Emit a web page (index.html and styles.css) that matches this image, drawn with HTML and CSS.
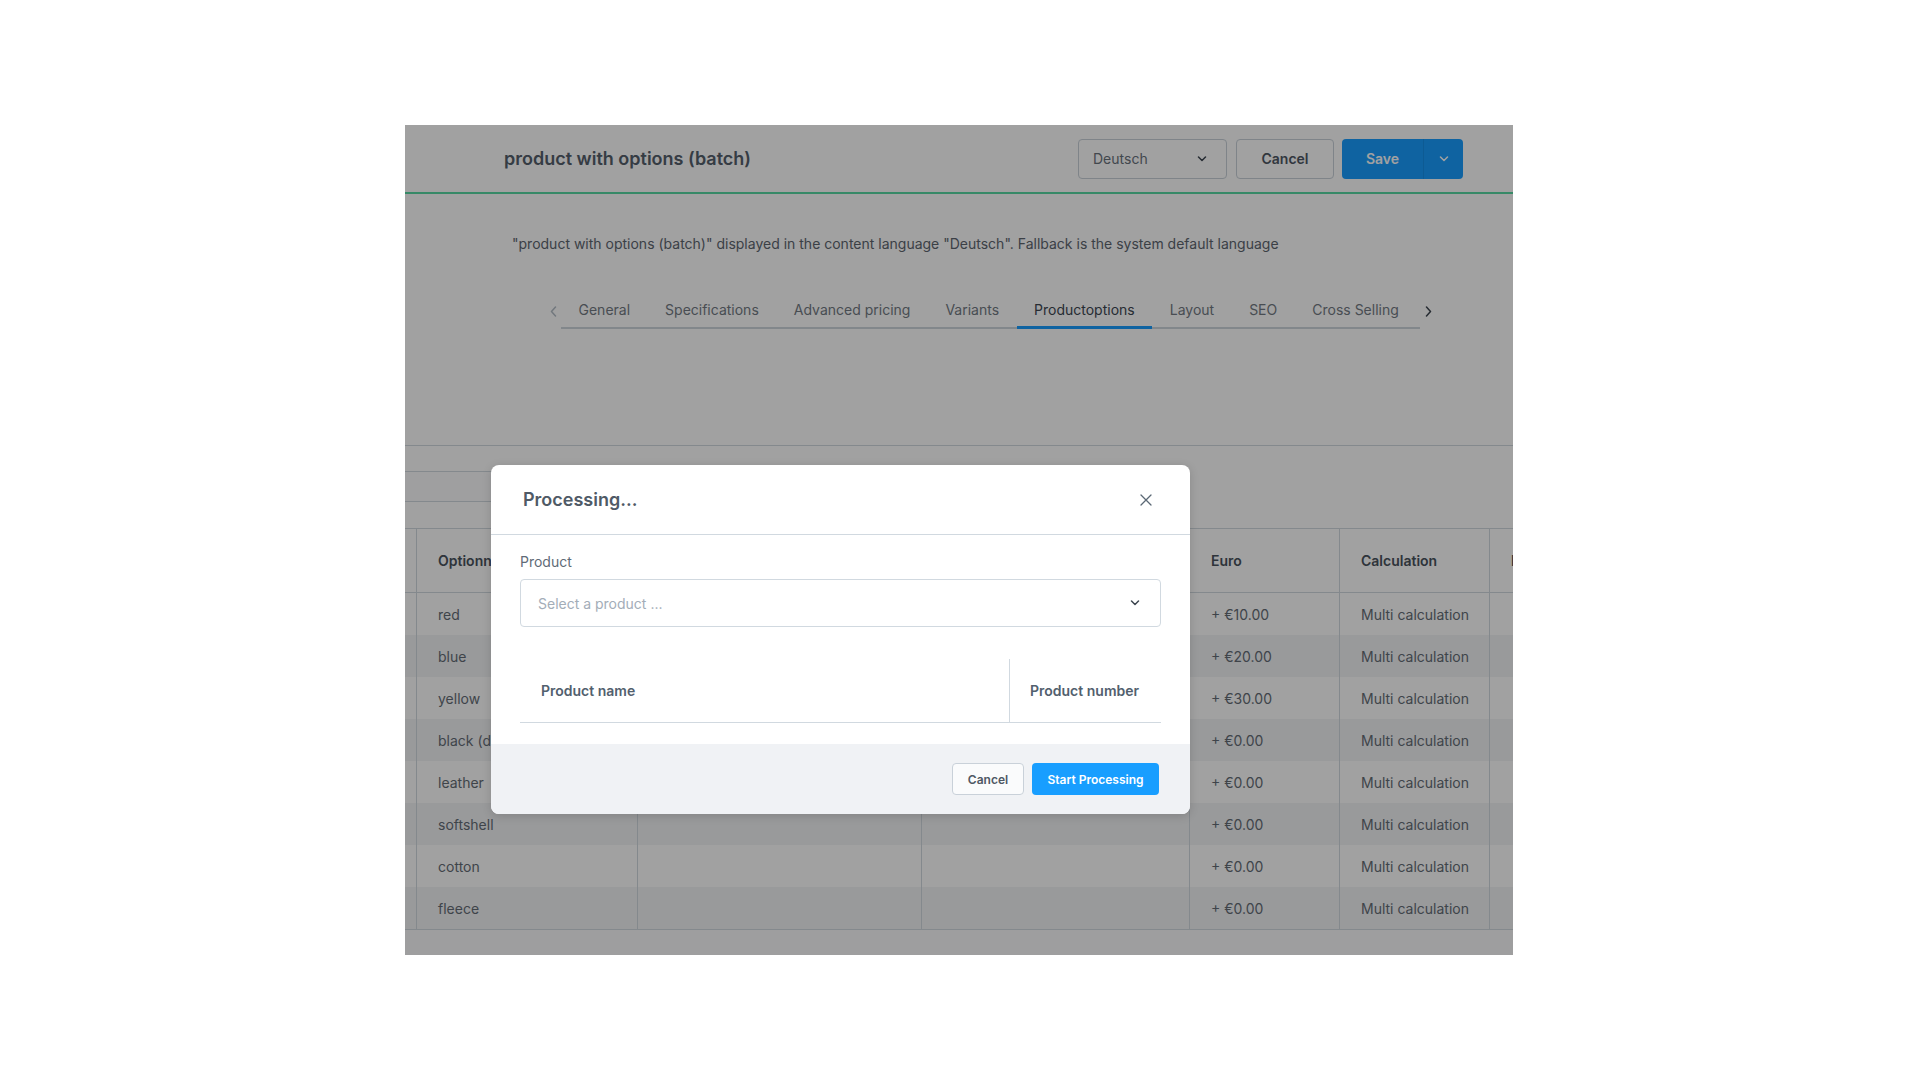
FILE: index.html
```html
<!DOCTYPE html>
<html lang="en">
<head>
    <meta charset="UTF-8">
    <meta name="viewport" content="width=device-width, initial-scale=1.0">
    <title>product with options (batch)</title>
    <link rel="stylesheet" href="styles.css">
</head>
<body>
    <div class="app">
        <header class="smart-bar">
            <h1 class="smart-bar__title">product with options (batch)</h1>
            <div class="smart-bar__actions">
                <div class="lang-select">
                    <span>Deutsch</span>
                    <svg width="10" height="6" viewBox="0 0 10 6"><path d="M1.5 1l3.5 3.5L8.5 1" /></svg>
                </div>
                <button class="btn btn--ghost">Cancel</button>
                <div class="save-group">
                    <button class="btn btn--primary btn--save">Save</button>
                    <button class="btn btn--primary btn--toggle">
                        <svg width="10" height="6" viewBox="0 0 10 6"><path d="M1.5 1l3.5 3.5L8.5 1" /></svg>
                    </button>
                </div>
            </div>
        </header>

        <p class="lang-info">"product with options (batch)" displayed in the content language "Deutsch". Fallback is the system default language</p>

        <nav class="tabs">
            <span class="tabs__arrow tabs__arrow--off">
                <svg width="7" height="11" viewBox="0 0 7 11"><path d="M5.5 1L1.5 5.5l4 4.5" /></svg>
            </span>
            <div class="tabs__list">
                <span class="tabs__item">General</span>
                <span class="tabs__item">Specifications</span>
                <span class="tabs__item">Advanced pricing</span>
                <span class="tabs__item">Variants</span>
                <span class="tabs__item tabs__item--active">Productoptions</span>
                <span class="tabs__item">Layout</span>
                <span class="tabs__item">SEO</span>
                <span class="tabs__item">Cross Selling</span>
            </div>
            <span class="tabs__arrow">
                <svg width="7" height="11" viewBox="0 0 7 11"><path d="M1.5 1l4 4.5-4 4.5" /></svg>
            </span>
        </nav>

        <div class="toolbar">
            <div class="toolbar__field"></div>
        </div>

        <div class="grid">
            <div class="grid__row grid__row--head">
                <div class="grid__cell grid__cell--pin"></div>
                <div class="grid__cell">Optionname</div>
                <div class="grid__cell"></div>
                <div class="grid__cell"></div>
                <div class="grid__cell">Euro</div>
                <div class="grid__cell">Calculation</div>
                <div class="grid__cell">P</div>
            </div>
            <div class="grid__row">
                <div class="grid__cell grid__cell--pin"></div><div class="grid__cell">red</div><div class="grid__cell"></div><div class="grid__cell"></div>
                <div class="grid__cell">+ €10.00</div><div class="grid__cell">Multi calculation</div><div class="grid__cell"></div>
            </div>
            <div class="grid__row">
                <div class="grid__cell grid__cell--pin"></div><div class="grid__cell">blue</div><div class="grid__cell"></div><div class="grid__cell"></div>
                <div class="grid__cell">+ €20.00</div><div class="grid__cell">Multi calculation</div><div class="grid__cell"></div>
            </div>
            <div class="grid__row">
                <div class="grid__cell grid__cell--pin"></div><div class="grid__cell">yellow</div><div class="grid__cell"></div><div class="grid__cell"></div>
                <div class="grid__cell">+ €30.00</div><div class="grid__cell">Multi calculation</div><div class="grid__cell"></div>
            </div>
            <div class="grid__row">
                <div class="grid__cell grid__cell--pin"></div><div class="grid__cell">black (dark)</div><div class="grid__cell"></div><div class="grid__cell"></div>
                <div class="grid__cell">+ €0.00</div><div class="grid__cell">Multi calculation</div><div class="grid__cell"></div>
            </div>
            <div class="grid__row">
                <div class="grid__cell grid__cell--pin"></div><div class="grid__cell">leather</div><div class="grid__cell"></div><div class="grid__cell"></div>
                <div class="grid__cell">+ €0.00</div><div class="grid__cell">Multi calculation</div><div class="grid__cell"></div>
            </div>
            <div class="grid__row">
                <div class="grid__cell grid__cell--pin"></div><div class="grid__cell">softshell</div><div class="grid__cell"></div><div class="grid__cell"></div>
                <div class="grid__cell">+ €0.00</div><div class="grid__cell">Multi calculation</div><div class="grid__cell"></div>
            </div>
            <div class="grid__row">
                <div class="grid__cell grid__cell--pin"></div><div class="grid__cell">cotton</div><div class="grid__cell"></div><div class="grid__cell"></div>
                <div class="grid__cell">+ €0.00</div><div class="grid__cell">Multi calculation</div><div class="grid__cell"></div>
            </div>
            <div class="grid__row">
                <div class="grid__cell grid__cell--pin"></div><div class="grid__cell">fleece</div><div class="grid__cell"></div><div class="grid__cell"></div>
                <div class="grid__cell">+ €0.00</div><div class="grid__cell">Multi calculation</div><div class="grid__cell"></div>
            </div>
            <div class="grid__footer"></div>
        </div>

        <div class="backdrop"></div>

        <div class="modal">
            <div class="modal__header">
                <h2 class="modal__title">Processing...</h2>
                <button class="modal__close">
                    <svg width="12" height="12" viewBox="0 0 12 12"><path d="M1 1l10 10M11 1L1 11" /></svg>
                </button>
            </div>
            <div class="modal__body">
                <label class="field-label">Product</label>
                <div class="product-select">
                    <span>Select a product ...</span>
                    <svg width="10" height="6" viewBox="0 0 10 6"><path d="M1.5 1l3.5 3.5L8.5 1" /></svg>
                </div>
                <div class="modal-grid">
                    <div class="modal-grid__cell">Product name</div>
                    <div class="modal-grid__cell">Product number</div>
                </div>
            </div>
            <div class="modal__footer">
                <button class="btn-sm btn-sm--ghost">Cancel</button>
                <button class="btn-sm btn-sm--primary">Start Processing</button>
            </div>
        </div>
    </div>
</body>
</html>
```

FILE: styles.css
```css
* {
    box-sizing: border-box;
}

body {
    margin: 0;
    background: #fff;
    font-family: Inter, "Noto Sans", sans-serif;
}

button {
    font-family: inherit;
    cursor: pointer;
}

svg path {
    fill: none;
    stroke: currentColor;
    stroke-width: 1.5;
    stroke-linecap: round;
    stroke-linejoin: round;
}

.app {
    position: relative;
    width: 1108px;
    height: 830px;
    margin: 125px 0 0 405px;
    overflow: hidden;
    background: #fff;
}

/* top bar */
.smart-bar {
    display: flex;
    align-items: center;
    justify-content: space-between;
    height: 69px;
    padding: 0 50px 0 99px;
    border-bottom: 2px solid #57d9a3;
}

.smart-bar__title {
    margin: 0;
    font-size: 18px;
    font-weight: 600;
    color: #55606c;
}

.smart-bar__actions {
    display: flex;
    align-items: center;
}

.lang-select {
    display: flex;
    align-items: center;
    justify-content: space-between;
    width: 149px;
    height: 40px;
    padding: 0 19px 0 14px;
    border: 1px solid #c9d1d9;
    border-radius: 4px;
    font-size: 14px;
    color: #69727c;
}

.lang-select svg {
    color: #3d4650;
}

.btn {
    height: 40px;
    border-radius: 4px;
    font-size: 14px;
    font-weight: 600;
}

.btn--ghost {
    width: 98px;
    margin: 0 8px 0 9px;
    background: #fff;
    border: 1px solid #c9d1d9;
    color: #4f5864;
}

.save-group {
    display: flex;
}

.btn--primary {
    background: #189eff;
    border: none;
    color: #fff;
}

.btn--save {
    width: 81px;
    border-radius: 4px 0 0 4px;
}

.btn--toggle {
    display: flex;
    align-items: center;
    justify-content: center;
    width: 40px;
    border-left: 1px solid #1590ea;
    border-radius: 0 4px 4px 0;
}

.lang-info {
    margin: 40px 0 0 107px;
    font-size: 14px;
    line-height: 20px;
    color: #5e6670;
}

/* tabs */
.tabs {
    display: flex;
    align-items: flex-start;
    margin: 40px 0 0 140px;
}

.tabs__arrow {
    display: flex;
    align-items: center;
    justify-content: center;
    width: 16px;
    height: 35px;
    color: #3d4650;
}

.tabs__arrow--off {
    color: #b5bec7;
}

.tabs__list {
    display: flex;
    width: 859px;
    border-bottom: 2px solid #cfd6dd;
}

.tabs__item {
    height: 35px;
    margin-bottom: -2px;
    padding: 0 17.5px;
    line-height: 32px;
    font-size: 14px;
    color: #737b84;
    border-bottom: 3px solid transparent;
    white-space: nowrap;
}

.tabs__item--active {
    color: #3d4752;
    border-bottom-color: #189eff;
}

/* options grid */
.toolbar {
    height: 83px;
    margin-top: 116px;
    padding-top: 25px;
    border-top: 1px solid #d1d9e0;
}

.toolbar__field {
    width: 520px;
    height: 31px;
    border: 1px solid #d1d9e0;
    border-left: none;
    background: #fcfcfd;
}

.grid__row {
    display: grid;
    grid-template-columns: 12px 221px 284px 268px 150px 150px 220px;
    height: 42px;
}

.grid__row:nth-child(odd) {
    background: #f3f4f6;
}

.grid__row--head {
    height: 65px;
    border-top: 1px solid #d1d9e0;
    border-bottom: 1px solid #d1d9e0;
}

.grid__row--head.grid__row {
    background: #fff;
}

.grid__cell {
    display: flex;
    align-items: center;
    padding-left: 21px;
    border-right: 1px solid #d1d9e0;
    font-size: 14px;
    color: #656d76;
    white-space: nowrap;
    overflow: hidden;
}

.grid__cell--pin {
    padding-left: 0;
}

.grid__row--head .grid__cell {
    font-weight: 600;
    color: #4a535d;
}

.grid__footer {
    height: 30px;
    border-top: 1px solid #d1d9e0;
    background: #fafbfc;
}

/* modal */
.backdrop {
    position: absolute;
    inset: 0;
    background: rgba(0, 0, 0, 0.37);
}

.modal {
    position: absolute;
    left: 86px;
    top: 340px;
    width: 699px;
    background: #fff;
    border-radius: 8px;
    overflow: hidden;
    box-shadow: 0 2px 10px rgba(0, 0, 0, 0.15);
}

.modal__header {
    display: flex;
    align-items: center;
    justify-content: space-between;
    height: 70px;
    padding: 0 32px;
    border-bottom: 1px solid #d1d9e0;
}

.modal__title {
    margin: 0;
    font-size: 18px;
    font-weight: 600;
    color: #4f5a66;
}

.modal__close {
    display: flex;
    align-items: center;
    justify-content: center;
    width: 24px;
    height: 24px;
    padding: 0;
    border: none;
    background: none;
    color: #5b6875;
}

.modal__close svg path {
    stroke-width: 1.3;
}

.modal__body {
    padding: 17px 29px 21px;
}

.field-label {
    display: block;
    margin-bottom: 7px;
    font-size: 14px;
    line-height: 20px;
    color: #5f6b77;
}

.product-select {
    display: flex;
    align-items: center;
    justify-content: space-between;
    height: 48px;
    padding: 0 20px 0 17px;
    border: 1px solid #d1d9e0;
    border-radius: 4px;
    font-size: 14px;
    color: #a3adb8;
}

.product-select svg {
    color: #3d4650;
}

.modal-grid {
    display: grid;
    grid-template-columns: 489px 152px;
    height: 64px;
    margin-top: 32px;
    border-bottom: 1px solid #d1d9e0;
}

.modal-grid__cell {
    display: flex;
    align-items: center;
    padding-left: 21px;
    font-size: 14px;
    font-weight: 600;
    color: #52606e;
}

.modal-grid__cell + .modal-grid__cell {
    padding-left: 20px;
    border-left: 1px solid #d1d9e0;
}

.modal__footer {
    display: flex;
    align-items: center;
    justify-content: flex-end;
    gap: 8px;
    height: 70px;
    padding-right: 31px;
    background: #f0f2f5;
}

.btn-sm {
    height: 32px;
    border-radius: 4px;
    font-size: 12px;
    font-weight: 600;
}

.btn-sm--ghost {
    width: 72px;
    background: #fafbfc;
    border: 1px solid #c9d1d9;
    color: #4f5864;
}

.btn-sm--primary {
    width: 127px;
    background: #189eff;
    border: none;
    color: #fff;
}
```
